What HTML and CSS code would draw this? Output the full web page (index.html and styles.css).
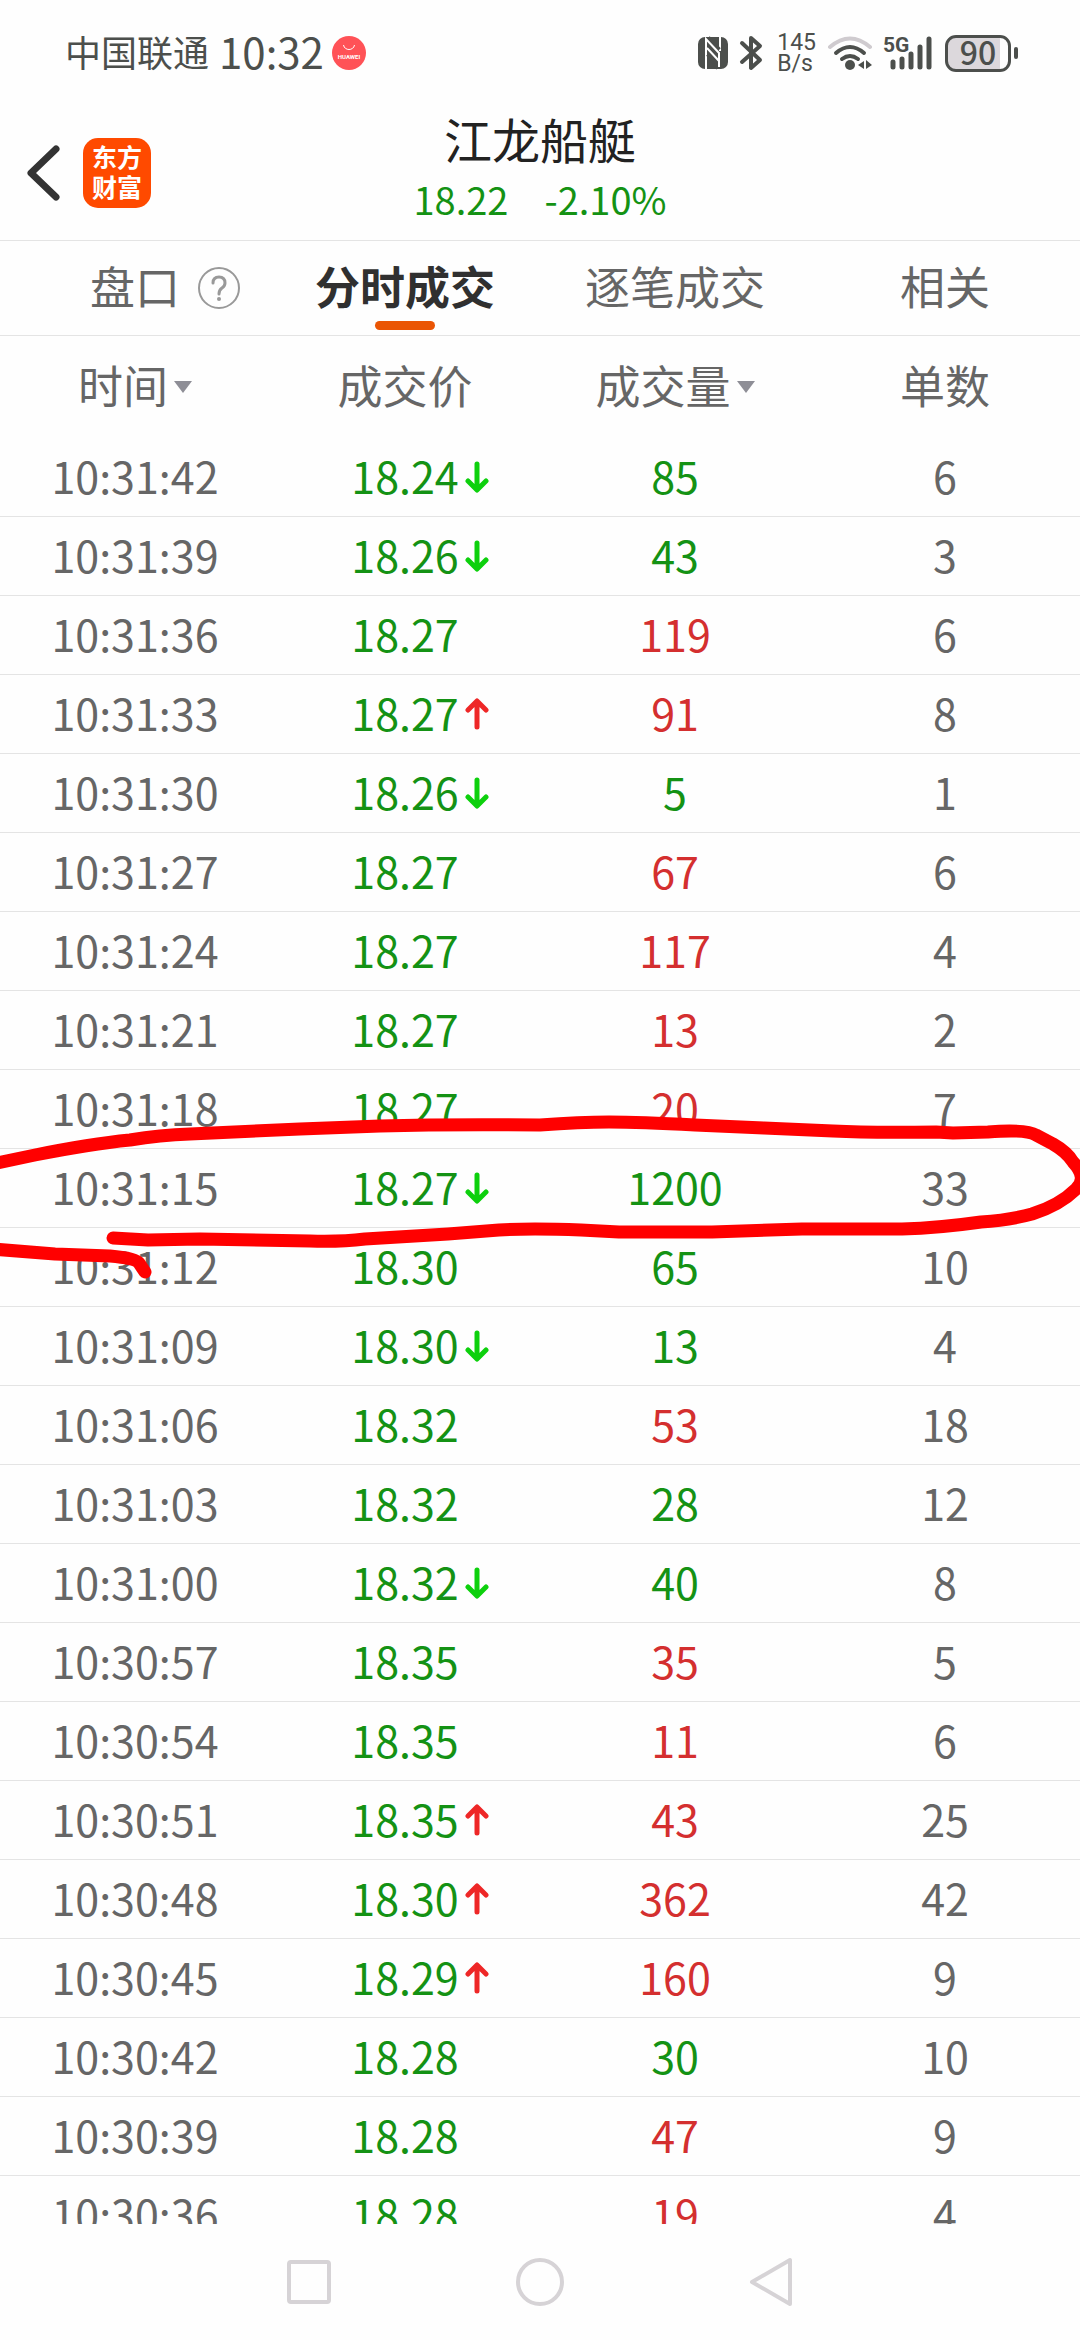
FILE: index.html
```html
<!DOCTYPE html>
<html lang="zh-CN">
<head>
<meta charset="utf-8">
<meta name="viewport" content="width=device-width, initial-scale=1">
<title>江龙船艇 分时成交</title>
<link rel="stylesheet" href="styles.css">
</head>
<body>
<svg class="defs" aria-hidden="true">
  <symbol id="down" viewBox="0 0 24 32"><path d="M12 3v25M3 20l9 9 9-9"/></symbol>
  <symbol id="up" viewBox="0 0 24 32"><path d="M12 29V4M3 12l9-9 9 9"/></symbol>
</svg>

<div class="status">
  <div class="status-left">
    <span class="carrier">中国联通</span>
    <span class="clock">10:32</span>
    <svg class="store" width="34" height="34" viewBox="0 0 34 34"><circle cx="17" cy="17" r="17" fill="#ff5257"/><path d="M11.500 9c1 6 10 6 11 0" fill="none" stroke="#fff" stroke-width="1"/><text x="17" y="22.500" text-anchor="middle" class="store-text">HUAWEI</text></svg>
  </div>
  <div class="status-right">
    <svg width="32" height="34" viewBox="0 0 32 34"><rect x="1" y="1" width="30" height="32" rx="7" fill="#4c4f4c"/><path d="M9 33V3l13 14v14M23 1v14M10 12l12 13" fill="none" stroke="#fff" stroke-width="2"/><path d="M10 19l10 14M12 1l11 12" stroke="#4c4f4c" stroke-width="2"/></svg>
    <svg class="bt" width="24" height="36" viewBox="0 0 24 36"><path d="M3 8l18 17-9 8V3l9 8L3 27" fill="none" stroke="#4c4f4c" stroke-width="4" stroke-linejoin="round" stroke-linecap="round"/></svg>
    <span class="speed">145<br>B/s</span>
    <svg class="wifi" width="46" height="36" viewBox="0 0 46 36"><g fill="none" stroke-linecap="round" stroke-width="4"><path d="M3 12Q23-5 43 12" stroke="#cfcbcf"/><path d="M9 18q14-12 28 0M15 24q8-6 16 0" stroke="#4c4f4c"/></g><circle cx="23" cy="30" r="5" fill="#4c4f4c"/><path d="M31 30l6-4v8zM39 25l6 5-6 4z" fill="#4c4f4c"/></svg>
    <div class="signal"><span class="gen">5G</span><svg width="52" height="36" viewBox="0 0 52 36"><path d="M10 27v5M19 24v8M28 19v13M37 12v20M46 4v28" fill="none" stroke="#4c4f4c" stroke-width="5" stroke-linecap="round"/></svg></div>
    <div class="battery"><span>90</span></div>
    <i class="nub"></i>
  </div>
</div>

<header class="header">
  <div class="header-left">
    <button class="back" aria-label="返回"><svg width="34" height="58" viewBox="0 0 34 58"><path d="M30 5L5 29l25 24" fill="none" stroke="#333" stroke-width="7" stroke-linecap="round" stroke-linejoin="round"/></svg></button>
    <div class="logo">东方<br>财富</div>
  </div>
  <div class="stock">
    <h1>江龙船艇</h1>
    <div class="quote"><span>18.22</span><span>-2.10%</span></div>
  </div>
</header>

<nav class="tabs">
  <button class="tab"><span>盘口</span><svg class="help" width="42" height="42" viewBox="0 0 42 42"><g fill="none" stroke="#999" stroke-width="2"><circle cx="21" cy="21" r="20"/><path d="M15 16q0-6 6-6t6 6q0 3-3 5t-3 6" stroke-width="3" stroke-linecap="round"/></g><circle cx="21" cy="32" r="2" fill="#999"/></svg></button>
  <button class="tab active"><span>分时成交</span></button>
  <button class="tab"><span>逐笔成交</span></button>
  <button class="tab"><span>相关</span></button>
</nav>

<main class="list">
<table>
<thead><tr><th><button class="sort">时间<i></i></button></th><th>成交价</th><th><button class="sort">成交量<i></i></button></th><th>单数</th></tr></thead>
<tbody>
<tr><td>10:31:42</td><td class="price"><div><span>18.24</span><svg class="down"><use href="#down"/></svg></div></td><td class="sell">85</td><td>6</td></tr>
<tr><td>10:31:39</td><td class="price"><div><span>18.26</span><svg class="down"><use href="#down"/></svg></div></td><td class="sell">43</td><td>3</td></tr>
<tr><td>10:31:36</td><td class="price"><div><span>18.27</span></div></td><td class="buy">119</td><td>6</td></tr>
<tr><td>10:31:33</td><td class="price"><div><span>18.27</span><svg class="up"><use href="#up"/></svg></div></td><td class="buy">91</td><td>8</td></tr>
<tr><td>10:31:30</td><td class="price"><div><span>18.26</span><svg class="down"><use href="#down"/></svg></div></td><td class="sell">5</td><td>1</td></tr>
<tr><td>10:31:27</td><td class="price"><div><span>18.27</span></div></td><td class="buy">67</td><td>6</td></tr>
<tr><td>10:31:24</td><td class="price"><div><span>18.27</span></div></td><td class="buy">117</td><td>4</td></tr>
<tr><td>10:31:21</td><td class="price"><div><span>18.27</span></div></td><td class="buy">13</td><td>2</td></tr>
<tr><td>10:31:18</td><td class="price"><div><span>18.27</span></div></td><td class="buy">20</td><td>7</td></tr>
<tr><td>10:31:15</td><td class="price"><div><span>18.27</span><svg class="down"><use href="#down"/></svg></div></td><td class="sell">1200</td><td>33</td></tr>
<tr><td>10:31:12</td><td class="price"><div><span>18.30</span></div></td><td class="sell">65</td><td>10</td></tr>
<tr><td>10:31:09</td><td class="price"><div><span>18.30</span><svg class="down"><use href="#down"/></svg></div></td><td class="sell">13</td><td>4</td></tr>
<tr><td>10:31:06</td><td class="price"><div><span>18.32</span></div></td><td class="buy">53</td><td>18</td></tr>
<tr><td>10:31:03</td><td class="price"><div><span>18.32</span></div></td><td class="sell">28</td><td>12</td></tr>
<tr><td>10:31:00</td><td class="price"><div><span>18.32</span><svg class="down"><use href="#down"/></svg></div></td><td class="sell">40</td><td>8</td></tr>
<tr><td>10:30:57</td><td class="price"><div><span>18.35</span></div></td><td class="buy">35</td><td>5</td></tr>
<tr><td>10:30:54</td><td class="price"><div><span>18.35</span></div></td><td class="buy">11</td><td>6</td></tr>
<tr><td>10:30:51</td><td class="price"><div><span>18.35</span><svg class="up"><use href="#up"/></svg></div></td><td class="buy">43</td><td>25</td></tr>
<tr><td>10:30:48</td><td class="price"><div><span>18.30</span><svg class="up"><use href="#up"/></svg></div></td><td class="buy">362</td><td>42</td></tr>
<tr><td>10:30:45</td><td class="price"><div><span>18.29</span><svg class="up"><use href="#up"/></svg></div></td><td class="buy">160</td><td>9</td></tr>
<tr><td>10:30:42</td><td class="price"><div><span>18.28</span></div></td><td class="sell">30</td><td>10</td></tr>
<tr><td>10:30:39</td><td class="price"><div><span>18.28</span></div></td><td class="buy">47</td><td>9</td></tr>
<tr><td>10:30:36</td><td class="price"><div><span>18.28</span></div></td><td class="buy">19</td><td>4</td></tr>
</tbody>
</table>
<svg class="scribble" viewBox="0 1100 1080 190" preserveAspectRatio="none" aria-hidden="true"><path d="M-8 1164L35 1155Q90 1144 130 1140Q160 1135 190 1134L300 1129L380 1126Q450 1124 540 1125Q580 1122 609 1122Q640 1122 695 1125L764 1128L833 1131Q870 1133 936 1132L953 1133L988 1132Q1026 1129 1036 1135L1053 1144Q1067 1152 1073 1162Q1088 1178 1076 1189Q1060 1205 1032 1214Q1010 1220 981 1222Q939 1228 902 1229L802 1229L712 1232H619L581 1230Q530 1228 499 1230L448 1234L365 1239Q340 1242 310 1241L200 1239L148 1240L113 1238M-8 1249L55 1254L110 1256Q135 1258 139 1263L145 1272"/></svg>
</main>

<nav class="sysnav">
  <button aria-label="最近任务"><svg width="48" height="50" viewBox="0 0 48 50"><rect x="4" y="5" width="40" height="40" rx="2"/></svg></button>
  <button aria-label="主页"><svg width="50" height="50" viewBox="0 0 50 50"><circle cx="25" cy="25" r="22"/></svg></button>
  <button aria-label="返回上一级"><svg width="48" height="50" viewBox="0 0 48 50"><path d="M43 3v44L5 25z"/></svg></button>
</nav>
</body>
</html>
```

FILE: styles.css
```css
* { box-sizing: border-box; }

body {
  margin: 0;
  height: 100vh;
  display: flex;
  flex-direction: column;
  overflow: hidden;
  background: #fefefe;
  color: #666;
  font-family: "Noto Sans CJK SC", sans-serif;
}

button {
  margin: 0;
  padding: 0;
  border: 0;
  background: none;
  color: inherit;
  font: inherit;
}

svg { display: block; flex: none; }
.defs { position: absolute; width: 0; height: 0; }

/* Status bar */
.status {
  flex: none;
  display: flex;
  justify-content: space-between;
  align-items: center;
  height: 106px;
  padding: 0 62px 0 65px;
  color: #4c4f4c;
}
.status-left, .status-right { display: flex; align-items: center; }
.carrier { font-size: 36px; line-height: 48px; padding-bottom: 4px; }
.clock { margin-left: 10px; font-size: 42px; line-height: 48px; padding-bottom: 4px; }
.store { margin-left: 8px; }
.store-text { fill: #fff; font: 700 6px Roboto, sans-serif; }
.bt { margin-left: 10px; }
.speed {
  margin-left: 14px;
  font: 23px/21px Roboto, sans-serif;
}
.wifi { margin-left: 11px; }
.signal { display: flex; position: relative; margin-left: 10px; }
.gen {
  position: absolute;
  top: 0;
  left: 0;
  font: 700 21px/20px Roboto, sans-serif;
}
.battery {
  width: 66px;
  height: 37px;
  margin-left: 10px;
  border: 3px solid #4c4f4c;
  border-radius: 11px;
  background: linear-gradient(90deg, #dcd8dc 52px, #fefefe 52px);
  text-align: center;
  font-size: 32px;
  font-weight: 500;
  line-height: 27px;
}
.nub { width: 4px; height: 12px; margin-left: 3px; border-radius: 2px; background: #4c4f4c; }

/* Header */
.header {
  flex: none;
  display: grid;
  grid-template-columns: 1fr auto 1fr;
  align-items: center;
  height: 135px;
  border-bottom: 1px solid #e4e4e4;
}
.header-left { display: flex; align-items: center; gap: 23px; padding-left: 26px; }
.logo {
  width: 68px;
  height: 70px;
  padding-top: 3px;
  border-radius: 15px;
  background: #ff4a00;
  color: #fff;
  font-size: 25px;
  font-weight: 700;
  line-height: 30px;
  text-align: center;
}
.stock { text-align: center; }
.stock h1 {
  margin: 0;
  color: #222;
  font-size: 48px;
  font-weight: 400;
  line-height: 64px;
}
.quote {
  display: flex;
  justify-content: center;
  gap: 36px;
  padding-bottom: 12px;
  color: #149214;
  font-size: 38px;
  line-height: 58px;
}

/* Tabs */
.tabs {
  flex: none;
  display: grid;
  grid-template-columns: repeat(4, 1fr);
  height: 95px;
  border-bottom: 1px solid #e4e4e4;
  font-size: 45px;
}
.tab {
  position: relative;
  display: grid;
  grid-template-columns: 1fr auto 1fr;
  align-items: center;
  line-height: 60px;
}
.tab span { grid-column: 2; padding-bottom: 4px; }
.help { margin-left: 18px; }
.active { color: #303030; font-weight: 700; }
.active::after {
  content: "";
  position: absolute;
  left: 50%;
  bottom: 5px;
  width: 60px;
  height: 9px;
  margin-left: -30px;
  border-radius: 5px;
  background: #ea5504;
}

/* Trades */
.list { flex: 1; min-height: 0; position: relative; overflow: hidden; }
table { width: 100%; table-layout: fixed; border-collapse: separate; border-spacing: 0; }
th { height: 102px; padding: 0 0 4px; font-size: 45px; font-weight: 400; line-height: 60px; }
.sort { display: inline-flex; align-items: center; gap: 6px; }
.sort i {
  margin-top: 4px;
  border: 9px solid transparent;
  border-top: 12px solid #8e8e96;
  border-bottom: 0;
}
td {
  height: 79px;
  padding: 0 0 4px;
  border-bottom: 1px solid #e4e4e4;
  font-size: 43px;
  line-height: 60px;
  text-align: center;
}
.price div { display: grid; grid-template-columns: 1fr auto 1fr; align-items: center; }
.price span { grid-column: 2; }
.price svg {
  width: 24px;
  height: 32px;
  margin: 4px 0 0 6px;
  fill: none;
  stroke-width: 5;
  stroke-linecap: round;
  stroke-linejoin: round;
}
.price, .sell { color: #149214; }
.buy { color: #d42f2f; }
.down { stroke: #0dd00d; }
.up { stroke: #ee2727; }

.scribble {
  position: absolute;
  top: 764px;
  left: 0;
  width: 100%;
  height: 190px;
  fill: none;
  stroke: #f00;
  stroke-width: 13;
  stroke-linecap: round;
  stroke-linejoin: round;
}

/* System navigation */
.sysnav {
  flex: none;
  display: flex;
  justify-content: center;
  align-items: center;
  gap: 131px;
  height: 116px;
}
.sysnav button { display: flex; justify-content: center; width: 100px; }
.sysnav svg { fill: none; stroke: #d6d3d6; stroke-width: 4; stroke-linejoin: round; }
```
